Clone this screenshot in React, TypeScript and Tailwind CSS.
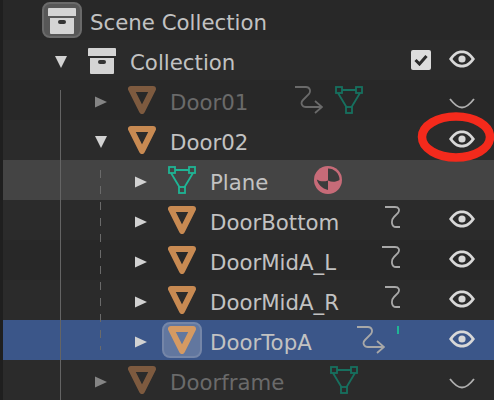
import type { ReactNode } from 'react'

function Twirl({ open, dim }: { open?: boolean; dim?: boolean }) {
    const fill = dim ? '#858585' : '#d2d2d2'
    if (open) {
        return (
            <svg width="12" height="12" viewBox="0 0 12 12" className="mt-[4px]">
                <path d="M0 0H12L6 12Z" fill={fill} />
            </svg>
        )
    }
    return (
        <svg width="12" height="12" viewBox="0 0 12 12" className="mt-[3px]">
            <path d="M0 .5L12 6L0 11.500Z" fill={fill} />
        </svg>
    )
}

function BoxIcon() {
    return (
        <svg width="28" height="26" viewBox="0 0 28 26" className="mt-[2px]">
            <path d="M0 1a1 1 0 0 1 1-1h26a1 1 0 0 1 1 1V8H0Z" fill="#d4d4d4" />
            <path d="M2 10H26V25a1 1 0 0 1-1 1H3a1 1 0 0 1-1-1Z" fill="#d4d4d4" />
            <rect x="10" y="12" width="8" height="4" rx="2" fill="#333" />
        </svg>
    )
}

function ObjectIcon({ color = '#c88a52' }: { color?: string }) {
    return (
        <svg width="28" height="28" viewBox="0 0 28 28">
            <path d="M3 3H25L14 25Z" fill="none" stroke={color} strokeWidth="6" strokeLinejoin="round" />
        </svg>
    )
}

function MeshIcon({ color = '#1fb595' }: { color?: string }) {
    return (
        <svg width="28" height="28" viewBox="0 0 28 28">
            <path d="M7 4H21M3 7L12 22M25 7L16 22" fill="none" stroke={color} strokeWidth="1.800" />
            <rect x="1" y="1" width="6" height="6" fill="none" stroke={color} strokeWidth="1.800" />
            <rect x="21" y="1" width="6" height="6" fill="none" stroke={color} strokeWidth="1.800" />
            <rect x="11" y="21" width="6" height="6" fill="none" stroke={color} strokeWidth="1.800" />
        </svg>
    )
}

function MaterialIcon() {
    return (
        <svg width="28" height="28" viewBox="0 0 28 28">
            <circle cx="14" cy="14" r="14" fill="#c76b78" />
            <path d="M14 2.500V14.500C18 16.500 22 16 25.500 14A11.500 11.500 0 0 0 14 2.500Z" fill="#3c3c3c" />
            <path d="M14 14.500C10 16 6 15.500 2.800 13.500C4 18.500 8 22.500 14 24Z" fill="#3c3c3c" />
        </svg>
    )
}

function Eye() {
    return (
        <svg width="26" height="18" viewBox="0 0 26 18" className="-mt-[2px]">
            <path
                fillRule="evenodd"
                d="M0 9C4 3 8 .5 13 .5S22 3 26 9C22 15 18 17.500 13 17.500S4 15 0 9ZM3.500 9C6.500 13 9 14.700 13 14.700S19.500 13 22.500 9C19.500 5 17 3.300 13 3.300S6.500 5 3.500 9Z"
                fill="#d8d8d8"
            />
            <circle cx="13" cy="9" r="3.600" fill="#d8d8d8" />
        </svg>
    )
}

function EyeClosed() {
    return (
        <svg width="26" height="11" viewBox="0 0 26 11" className="mt-[6px]">
            <path d="M1 1C6 7.500 9 9.500 13 9.500S20 7.500 25 1" fill="none" stroke="#b0b0b0" strokeWidth="1.800" />
        </svg>
    )
}

function Squiggle({ wide }: { wide?: boolean }) {
    return (
        <svg width={wide ? 18 : 15} height="22" viewBox={wide ? '-3 0 18 22' : '0 0 15 22'} className="-mt-[6px]">
            <path
                d={wide ? 'M-3 1H10C14 1 15 4 13 7L9 11C6 14 6 21 11 21H15' : 'M0 1H10C14 1 15 4 13 7L9 11C6 14 6 21 11 21H15'}
                fill="none"
                stroke="#a8a8a8"
                strokeWidth="1.800"
            />
        </svg>
    )
}

function SquiggleArrow({ color = '#a8a8a8' }: { color?: string }) {
    return (
        <svg width="28" height="28" viewBox="0 0 28 28">
            <path d="M0 1H11C15 1 16 5 14 8L8 14C5 17 7 21 11 21H27M20 15L27 21L20 27" fill="none" stroke={color} strokeWidth="1.800" />
        </svg>
    )
}

type RowProps = {
    bg: string
    depth: string
    twirl?: ReactNode
    icon: ReactNode
    name: string
    dim?: boolean
    nameBox?: string
    extras?: ReactNode
    right?: ReactNode
}

function Row({ bg, depth, twirl, icon, name, dim, nameBox, extras, right }: RowProps) {
    return (
        <div className={`flex h-10 items-center ${bg} ${depth}`}>
            <div className="flex w-[39px] justify-center pr-[3px]">{twirl}</div>
            <div className="flex w-10 justify-center">{icon}</div>
            <span className={`ml-[8px] mt-[5px] shrink-0 text-[21.3px] leading-none ${dim ? 'text-[#6a6a6a]' : 'text-[#c2c2c2]'} ${nameBox ?? ''}`}>
                {name}
            </span>
            {extras}
            <div className="ml-auto flex items-center gap-[18px] pr-[19px]">{right}</div>
        </div>
    )
}

export default function App() {
    return (
        <div className="relative flex h-[400px] w-[494px] overflow-hidden bg-[#282828] font-['DejaVu_Sans',sans-serif]">
            <div className="w-[3px] shrink-0 bg-[#1f1f1f]" />
            <div className="flex-1">
                <Row
                    bg="bg-[#282828]"
                    depth="pl-0"
                    icon={
                        <div className="flex h-9 w-10 items-center justify-center rounded-lg border-2 border-[#6a6a6a] bg-[#575757]">
                            <BoxIcon />
                        </div>
                    }
                    name="Scene Collection"
                />
                <Row
                    bg="bg-[#2b2b2b]"
                    depth="pl-10"
                    twirl={<Twirl open />}
                    icon={<BoxIcon />}
                    name="Collection"
                    right={
                        <>
                            <div className="flex h-5 w-5 items-center justify-center rounded-[2px] bg-[#dcdcdc]">
                                <svg width="14" height="12" viewBox="0 0 14 12">
                                    <path d="M1.500 6L5.500 10L12.500 2" fill="none" stroke="#2b2b2b" strokeWidth="3" />
                                </svg>
                            </div>
                            <Eye />
                        </>
                    }
                />
                <Row
                    bg="bg-[#282828]"
                    depth="pl-20"
                    twirl={<Twirl dim />}
                    icon={<ObjectIcon color="#7d5a3f" />}
                    name="Door01"
                    dim
                    nameBox="w-[125px]"
                    extras={
                        <div className="flex items-center gap-3">
                            <SquiggleArrow color="#6a6a6a" />
                            <MeshIcon color="#17705f" />
                        </div>
                    }
                    right={<EyeClosed />}
                />
                <Row bg="bg-[#2b2b2b]" depth="pl-20" twirl={<Twirl open />} icon={<ObjectIcon />} name="Door02" right={<Eye />} />
                <Row
                    bg="bg-[#444444]"
                    depth="pl-[120px]"
                    twirl={<Twirl />}
                    icon={<MeshIcon />}
                    name="Plane"
                    nameBox="w-[104px]"
                    extras={<MaterialIcon />}
                />
                <Row
                    bg="bg-[#2b2b2b]"
                    depth="pl-[120px]"
                    twirl={<Twirl />}
                    icon={<ObjectIcon />}
                    name="DoorBottom"
                    nameBox="w-[175px]"
                    extras={<Squiggle />}
                    right={<Eye />}
                />
                <Row
                    bg="bg-[#282828]"
                    depth="pl-[120px]"
                    twirl={<Twirl />}
                    icon={<ObjectIcon />}
                    name="DoorMidA_L"
                    nameBox="w-[172px]"
                    extras={<Squiggle wide />}
                    right={<Eye />}
                />
                <Row
                    bg="bg-[#2b2b2b]"
                    depth="pl-[120px]"
                    twirl={<Twirl />}
                    icon={<ObjectIcon />}
                    name="DoorMidA_R"
                    nameBox="w-[175px]"
                    extras={<Squiggle />}
                    right={<Eye />}
                />
                <Row
                    bg="bg-[#3b5689]"
                    depth="pl-[120px]"
                    twirl={<Twirl />}
                    icon={
                        <div className="flex h-9 w-10 items-center justify-center rounded-lg border-2 border-[#7586a8] bg-[#62779f]">
                            <ObjectIcon color="#d59a63" />
                        </div>
                    }
                    name="DoorTopA"
                    nameBox="w-[147px]"
                    extras={
                        <div className="flex items-center gap-3">
                            <SquiggleArrow />
                            <div className="-mt-[20px] h-2 w-[2px] bg-[#1fb595]" />
                        </div>
                    }
                    right={<Eye />}
                />
                <Row
                    bg="bg-[#2b2b2b]"
                    depth="pl-20"
                    twirl={<Twirl dim />}
                    icon={<ObjectIcon color="#7d5a3f" />}
                    name="Doorframe"
                    dim
                    nameBox="w-[160px]"
                    extras={<MeshIcon color="#17705f" />}
                    right={<EyeClosed />}
                />
            </div>

            {/* hierarchy lines */}
            <div className="absolute left-[60px] top-[90px] h-[310px] w-px bg-[#646464]" />
            <div className="absolute left-[100px] top-[170px] h-[180px] w-px bg-[repeating-linear-gradient(to_bottom,#6a6a6a_0,#6a6a6a_8px,transparent_8px,transparent_16px)]" />

            {/* red annotation ring */}
            <svg width="82" height="56" viewBox="0 0 82 56" className="absolute left-[415px] top-[109px]">
                <ellipse cx="41" cy="28" rx="34" ry="20.500" fill="none" stroke="#f42a1c" strokeWidth="8.500" />
            </svg>
        </div>
    )
}
